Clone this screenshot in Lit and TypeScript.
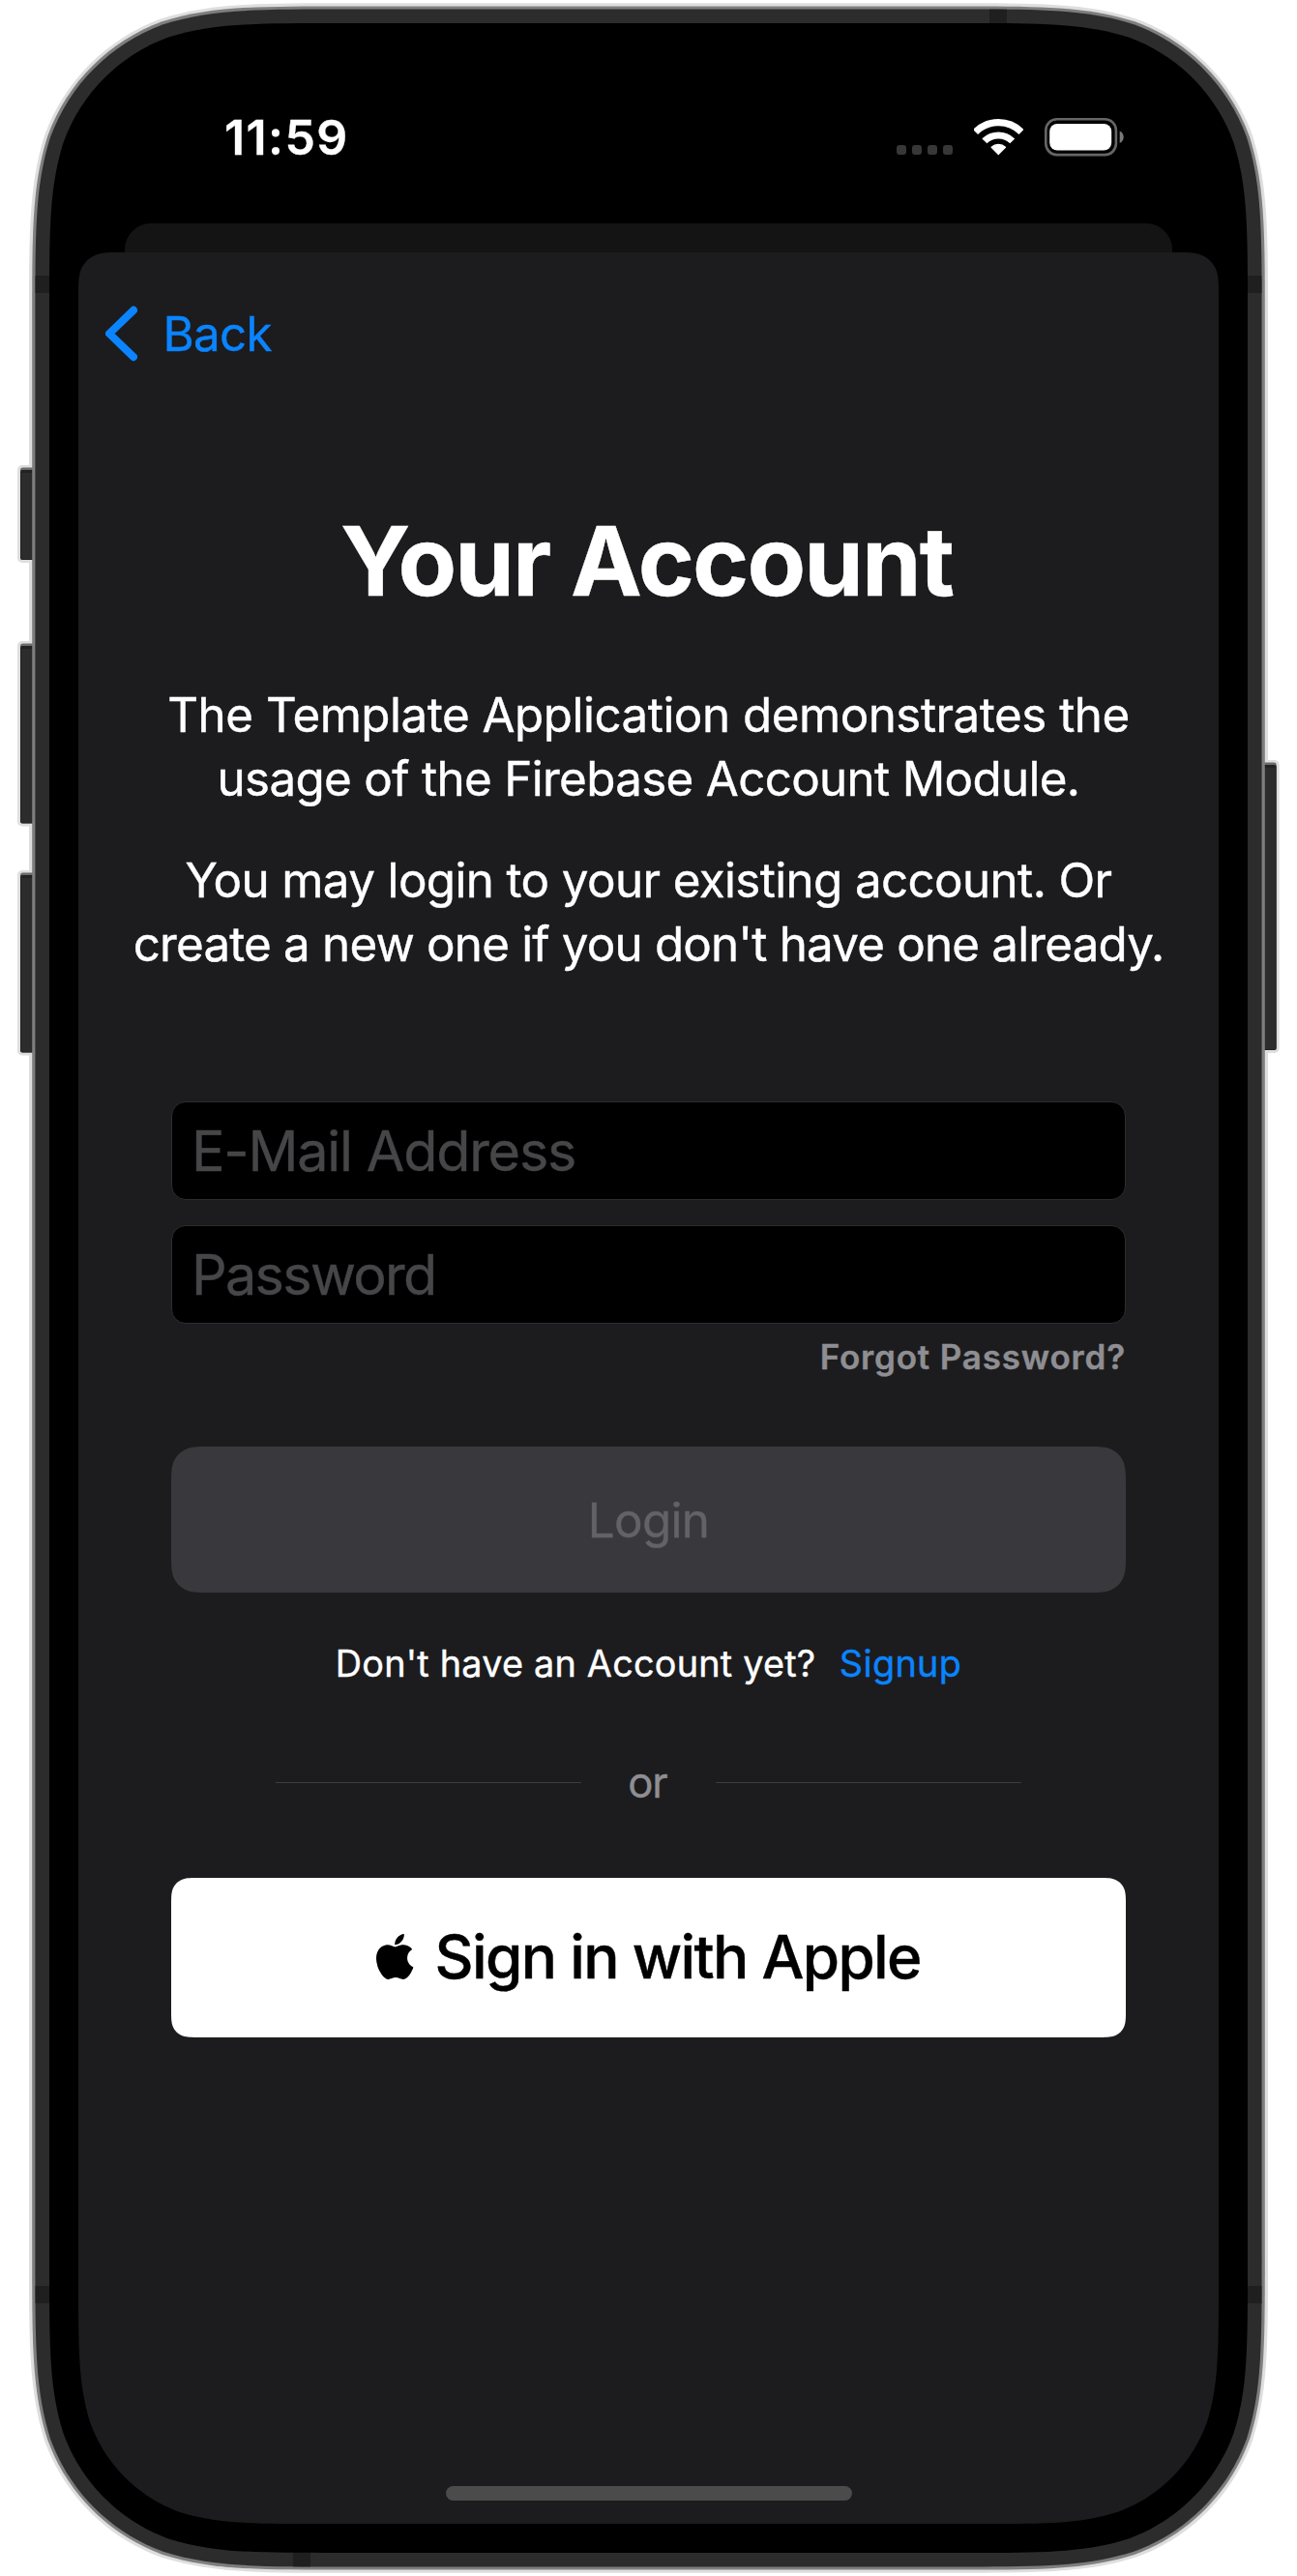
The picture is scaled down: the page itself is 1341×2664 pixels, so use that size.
import { LitElement, html, svg, css, unsafeCSS } from "lit";
import { customElement, state } from "lit/decorators.js";

/** Rounded rectangle with continuous-curvature corners: [topLeft, topRight, bottomRight, bottomLeft]. */
function squircle(x: number, y: number, w: number, h: number, radii: number[]): string {
  const r = (n: number) => Math.round(n * 100) / 100;
  const pt = (px: number, py: number) => `${r(px)} ${r(py)}`;
  const [a, b, c, d] = radii;
  const E = 1.52866, F = 1.08849, G = 0.86841, H = 0.63149, I = 0.37282, J = 0.16906, K = 0.07491;
  const R = x + w, B = y + h;
  return [
    `M${pt(x + E * a, y)}`,
    `L${pt(R - E * b, y)}`,
    `C${pt(R - F * b, y)} ${pt(R - G * b, y)} ${pt(R - H * b, y + K * b)}`,
    `C${pt(R - I * b, y + J * b)} ${pt(R - J * b, y + I * b)} ${pt(R - K * b, y + H * b)}`,
    `C${pt(R, y + G * b)} ${pt(R, y + F * b)} ${pt(R, y + E * b)}`,
    `L${pt(R, B - E * c)}`,
    `C${pt(R, B - F * c)} ${pt(R, B - G * c)} ${pt(R - K * c, B - H * c)}`,
    `C${pt(R - J * c, B - I * c)} ${pt(R - I * c, B - J * c)} ${pt(R - H * c, B - K * c)}`,
    `C${pt(R - G * c, B)} ${pt(R - F * c, B)} ${pt(R - E * c, B)}`,
    `L${pt(x + E * d, B)}`,
    `C${pt(x + F * d, B)} ${pt(x + G * d, B)} ${pt(x + H * d, B - K * d)}`,
    `C${pt(x + I * d, B - J * d)} ${pt(x + J * d, B - I * d)} ${pt(x + K * d, B - H * d)}`,
    `C${pt(x, B - G * d)} ${pt(x, B - F * d)} ${pt(x, B - E * d)}`,
    `L${pt(x, y + E * a)}`,
    `C${pt(x, y + F * a)} ${pt(x, y + G * a)} ${pt(x + K * a, y + H * a)}`,
    `C${pt(x + J * a, y + I * a)} ${pt(x + I * a, y + J * a)} ${pt(x + H * a, y + K * a)}`,
    `C${pt(x + G * a, y)} ${pt(x + F * a, y)} ${pt(x + E * a, y)}Z`,
  ].join("");
}

const all = (r: number) => [r, r, r, r];
const clip = (w: number, h: number, radii: number[]) =>
  unsafeCSS(`path("${squircle(0, 0, w, h, radii)}")`);

@customElement("device-frame")
export class DeviceFrame extends LitElement {
  static styles = css`
    :host {
      display: block;
      position: relative;
      width: 1341px;
      height: 2664px;
      box-sizing: border-box;
      padding: 54px 81px;
    }
    .frame {
      position: absolute;
      inset: 0;
    }
    .screen {
      position: relative;
      width: 1179px;
      height: 2556px;
      clip-path: ${clip(1179, 2556, all(165))};
    }
  `;

  private sideButton(x: number, y: number, h: number, left: boolean) {
    const cx = left ? x + 3 : x;
    return svg`
      <rect x=${x} y=${y} width="22" height=${h} rx="5" fill="#dedede"></rect>
      <rect x=${cx} y=${y + 2.5} width="19" height=${h - 5.5} rx="2.5" fill="#6a6b6a"></rect>
      <rect x=${cx} y=${y + 5} width="19" height=${h - 8} rx="2" fill="#222222"></rect>
      <rect x=${cx + (left ? 1 : 0)} y=${y + 8} width="18" height=${h - 12} fill="#2c2c2c"></rect>`;
  }

  render() {
    return html`
      <svg class="frame" width="1341" height="2664" viewBox="0 0 1341 2664" aria-hidden="true">
        <path d=${squircle(30, 3.3, 1281, 2657.5, all(216))} fill="#dedede"></path>
        ${this.sideButton(18, 481, 101, true)}
        ${this.sideButton(18, 663, 191.5, true)}
        ${this.sideButton(18, 900, 191.5, true)}
        ${this.sideButton(1300.7, 786, 303, false)}
        <path d=${squircle(33.2, 6.4, 1274.6, 2651.2, all(213))} fill="#7e7e7e"></path>
        <path d=${squircle(36.4, 9.5, 1268.2, 2645, all(209.6))} fill="#2c2c2c"></path>
        <g fill="#1f1f1f">
          <rect x="36.6" y="285" width="16" height="18"></rect>
          <rect x="1288" y="285" width="16.4" height="18"></rect>
          <rect x="36.6" y="2364" width="16" height="18"></rect>
          <rect x="1288" y="2364" width="16.4" height="18"></rect>
          <rect x="1023" y="9.7" width="18" height="16"></rect>
          <rect x="303" y="2638" width="18" height="16.3"></rect>
        </g>
        <path d=${squircle(51, 24, 1239, 2616, all(195))} fill="#000"></path>
      </svg>
      <div class="screen"><slot></slot></div>
    `;
  }
}

@customElement("status-bar")
export class StatusBar extends LitElement {
  static styles = css`
    :host {
      display: flex;
      align-items: center;
      justify-content: space-between;
      height: 177px;
      box-sizing: border-box;
      padding: 0 98px 1px 151px;
      color: #fff;
    }
    .time {
      font-size: 50px;
      font-weight: 600;
      letter-spacing: 1.4px;
      line-height: 60px;
      -webkit-text-stroke: 0.3px;
    }
    .icons {
      display: flex;
      gap: 22px;
    }
    svg {
      display: block;
    }
  `;

  render() {
    return html`
      <div class="time">11:59</div>
      <div class="icons">
        <svg width="58" height="40" viewBox="0 0 58 40" fill="#373737">
          ${[0, 16, 32, 48].map((x) => svg`<rect x=${x} y="28" width="10" height="10" rx="3"></rect>`)}
        </svg>
        <svg width="51" height="40" viewBox="0 0 51 40" fill="none" stroke="#fff">
          <path d="M1.54 14.54A33.6 33.6 0 0 1 49.06 14.54" stroke-width="7.2"></path>
          <path d="M10.88 23.88A20.4 20.4 0 0 1 39.72 23.88" stroke-width="7"></path>
          <path d="M25.3 37.6L18.1 30.3A10.4 10.4 0 0 1 32.5 30.3Z" fill="#fff" stroke-width="1.2" stroke-linejoin="round"></path>
        </svg>
        <svg width="82" height="40" viewBox="0 0 82 40">
          <rect x="1.3" y="1.3" width="72.6" height="36.8" rx="11.5" fill="none" stroke="#666" stroke-width="2.6"></rect>
          <rect x="5.2" y="6" width="64" height="27.6" rx="8" fill="#fff"></rect>
          <path d="M77.7 13.5c2.4 1 4 3.4 4 6.2s-1.6 5.2-4 6.2z" fill="#7a7a7a"></path>
        </svg>
      </div>
    `;
  }
}

@customElement("account-sheet")
export class AccountSheet extends LitElement {
  static styles = css`
    :host {
      display: flex;
      flex-direction: column;
      height: 2349px;
      box-sizing: border-box;
      padding-bottom: 24px;
      background: #1c1c1e;
      color: #fff;
      clip-path: ${clip(1179, 2349, [30, 30, 0, 0])};
      -webkit-text-stroke: 0.4px;
    }
    button,
    input {
      font: inherit;
      letter-spacing: inherit;
      margin: 0;
      padding: 0;
      border: 0;
      outline: 0;
      background: none;
      color: inherit;
    }
    svg {
      display: block;
      flex: none;
    }
    nav {
      height: 168px;
      padding-left: 28px;
      display: flex;
      align-items: center;
    }
    .back {
      display: flex;
      align-items: center;
      gap: 26.5px;
      color: #0a84ff;
      font-size: 49.3px;
      letter-spacing: -0.7px;
      line-height: 60px;
    }
    h1 {
      margin: 91px 0 66px;
      padding-right: 4px;
      text-align: center;
      font-size: 99px;
      font-weight: 700;
      line-height: 120px;
      letter-spacing: -1.9px;
    }
    p {
      margin: 0 0 39px;
      text-align: center;
      font-size: 49.3px;
      line-height: 66px;
      white-space: nowrap;
    }
    .line {
      display: block;
    }
    .ls-1 {
      letter-spacing: -0.48px;
    }
    .ls-2 {
      letter-spacing: -0.66px;
    }
    .ls-3 {
      letter-spacing: -0.61px;
    }
    .ls-4 {
      letter-spacing: -0.8px;
    }
    form {
      display: flex;
      flex-direction: column;
      margin: 91px 96px 0;
    }
    .field {
      height: 102px;
      box-sizing: border-box;
      padding: 0 20px;
      border: 1px solid #2d2d2f;
      border-radius: 15px;
      background: #000;
      font-size: 57.5px;
    }
    .field::placeholder {
      color: #464649;
      opacity: 1;
    }
    .email {
      margin-bottom: 26px;
      letter-spacing: -1.22px;
    }
    .password {
      letter-spacing: -1.7px;
    }
    .forgot {
      align-self: flex-end;
      margin-top: 13px;
      color: #8e8e93;
      font-size: 35px;
      font-weight: 600;
      line-height: 43px;
      letter-spacing: 0.82px;
    }
    .login {
      height: 151px;
      margin-top: 71px;
      background: #39383d;
      color: #636267;
      font-size: 49.3px;
      letter-spacing: -0.65px;
      clip-path: ${clip(987, 151, all(27))};
    }
    .signup {
      display: flex;
      justify-content: center;
      gap: 24.5px;
      margin-top: 50px;
      font-size: 37.8px;
      line-height: 46px;
      letter-spacing: 0.22px;
    }
    .link {
      color: #0a84ff;
      letter-spacing: 0.33px;
      line-height: 46px;
    }
    .divider {
      display: grid;
      grid-template-columns: 316px 139px 316px;
      justify-content: center;
      align-items: center;
      margin-top: 74px;
      color: #8e8e93;
      font-size: 43.6px;
      line-height: 53px;
      letter-spacing: -1.1px;
      text-align: center;
    }
    .divider span {
      padding-right: 2px;
    }
    .rule {
      height: 1px;
      background: #3d3d40;
    }
    .apple {
      display: flex;
      align-items: center;
      justify-content: center;
      gap: 22px;
      height: 165px;
      margin-top: 72px;
      padding-bottom: 2px;
      background: #fff;
      color: #000;
      font-size: 62px;
      font-weight: 500;
      letter-spacing: -1.65px;
      clip-path: ${clip(987, 165, all(19))};
    }
    .home {
      width: 420px;
      height: 15px;
      margin: auto auto 0;
      border-radius: 8px;
      background: #4b4b4c;
    }
  `;

  @state() private email = "";
  @state() private password = "";

  render() {
    return html`
      <nav>
        <button class="back">
          <svg width="33" height="58" viewBox="0 0 33 58" fill="none" stroke="#0a84ff" stroke-width="8" stroke-linecap="round" stroke-linejoin="round">
            <path d="M29 4.8L4 29L29 53.2"></path>
          </svg>
          <span>Back</span>
        </button>
      </nav>
      <h1>Your Account</h1>
      <p>
        <span class="line ls-1">The Template Application demonstrates the</span>
        <span class="line ls-2">usage of the Firebase Account Module.</span>
      </p>
      <p>
        <span class="line ls-3">You may login to your existing account. Or</span>
        <span class="line ls-4">create a new one if you don't have one already.</span>
      </p>
      <form @submit=${(e: Event) => e.preventDefault()}>
        <input
          class="field email"
          type="email"
          placeholder="E-Mail Address"
          .value=${this.email}
          @input=${(e: InputEvent) => (this.email = (e.target as HTMLInputElement).value)}
        />
        <input
          class="field password"
          type="password"
          placeholder="Password"
          .value=${this.password}
          @input=${(e: InputEvent) => (this.password = (e.target as HTMLInputElement).value)}
        />
        <button type="button" class="forgot">Forgot Password?</button>
        <button class="login" ?disabled=${!this.email || !this.password}>Login</button>
        <div class="signup">
          <span>Don't have an Account yet?</span>
          <button type="button" class="link">Signup</button>
        </div>
        <div class="divider">
          <div class="rule"></div>
          <span>or</span>
          <div class="rule"></div>
        </div>
        <button type="button" class="apple">
          <svg width="38.4" height="47" viewBox="4 32 376.5 448" preserveAspectRatio="none" fill="#000">
            <path d="M318.7 268.7c-.2-36.7 16.4-64.4 50-84.8-18.8-26.9-47.2-41.7-84.7-44.6-35.5-2.8-74.3 20.7-88.5 20.7-15 0-49.4-19.7-76.4-19.7C63.3 141.2 4 184.8 4 273.5q0 39.3 14.4 81.2c12.8 36.7 59 126.7 107.2 125.2 25.2-.6 43-17.9 75.8-17.9 31.8 0 48.3 17.9 76.4 17.9 48.6-.7 90.4-82.5 102.6-119.3-65.2-30.7-61.7-90-61.7-91.9zm-56.6-164.2c27.3-32.4 24.8-61.9 24-72.5-24.1 1.4-52 16.4-67.9 34.9-17.5 19.8-27.8 44.3-25.6 71.9 26.1 2 49.9-11.4 69.5-34.3z"></path>
          </svg>
          <span>Sign in with Apple</span>
        </button>
      </form>
      <div class="home"></div>
    `;
  }
}

@customElement("app-root")
export class AppRoot extends LitElement {
  static styles = css`
    :host {
      display: block;
      width: 1341px;
      height: 2664px;
      overflow: hidden;
      background: #fff;
      font-family: Inter, "Liberation Sans", sans-serif;
    }
    .peek {
      height: 30px;
      margin: 0 48px;
      background: #141414;
      border-radius: 27px 27px 0 0;
    }
  `;

  render() {
    return html`
      <device-frame>
        <status-bar></status-bar>
        <div class="peek"></div>
        <account-sheet></account-sheet>
      </device-frame>
    `;
  }
}
